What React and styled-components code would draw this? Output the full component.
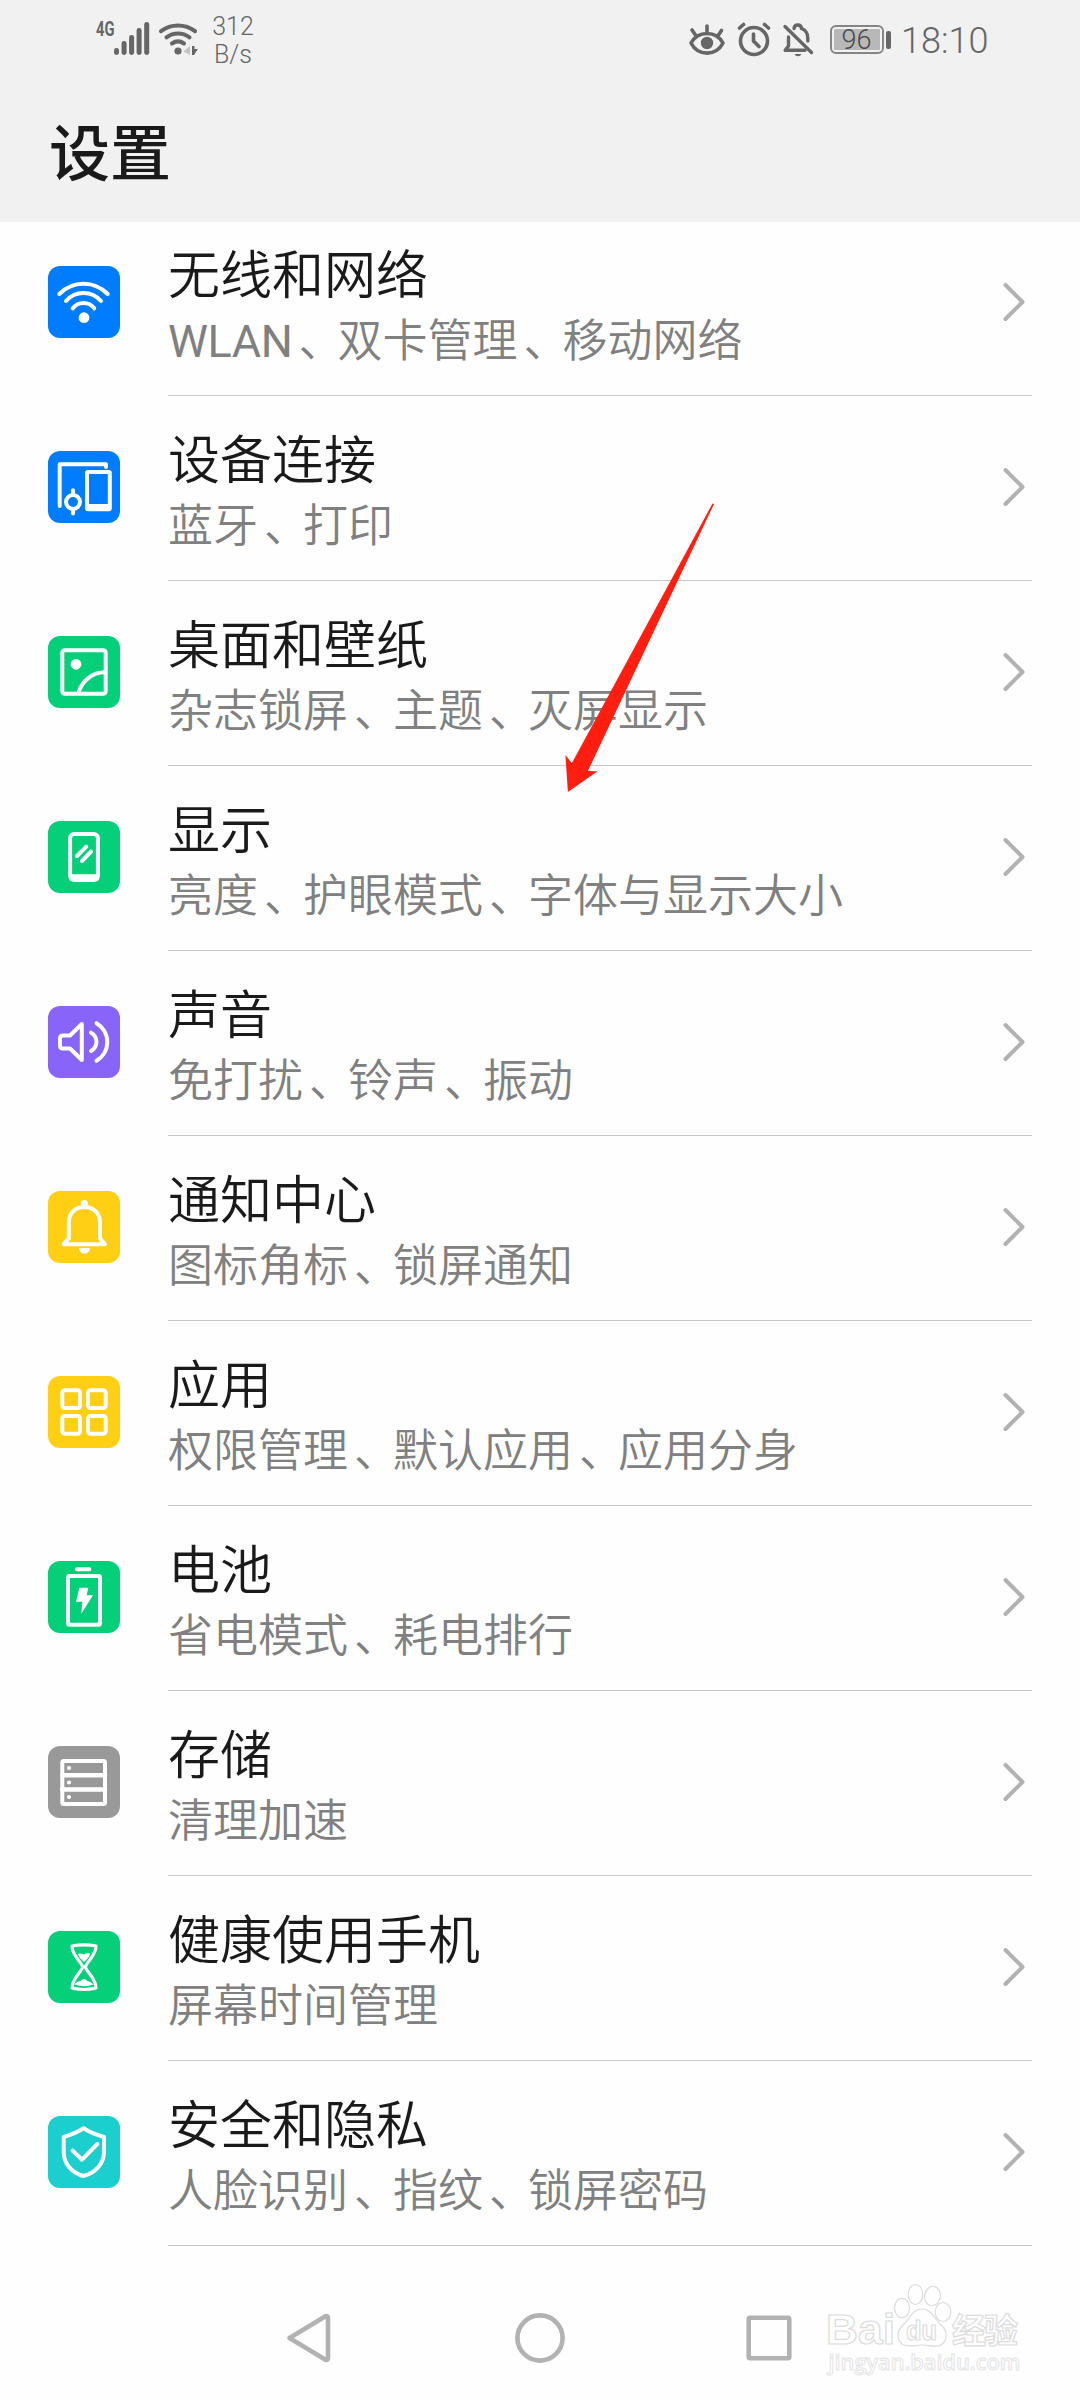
import { Fragment } from "react";
import styled, { createGlobalStyle } from "styled-components";

const colors = {
    blue: "#007dff",
    green: "#06cf79",
    purple: "#8864f8",
    yellow: "#ffcf14",
    grey: "#999999",
    cyan: "#1bcfcf",
    status: "#666666"
}

const GlobalStyle = createGlobalStyle`
    * {
        box-sizing: border-box;
    }

    body {
        margin: 0;
        background: #fefefe;
        font-family: Roboto, "Noto Sans CJK SC", sans-serif;
    }
`

const Screen = styled.div`
    position: relative;
    display: flex;
    flex-direction: column;
    width: 1080px;
    height: 2400px;
    overflow: hidden;
    background: #fefefe;
`

const Header = styled.header`
    height: 222px;
    flex: none;
    background: #f1f1f1;
`

const StatusBar = styled.div`
    display: flex;
    justify-content: space-between;
    height: 80px;
    padding: 0 90px 0 96px;
    color: ${colors.status};
`

const StatusGroup = styled.div`
    display: flex;
    align-items: flex-start;
`

const StatusIcon = styled.svg`
    display: block;
    flex: none;
    margin-top: 20px;
    margin-right: ${props => props.$gap || 0}px;
    overflow: visible;
`

const NetworkType = styled.span`
    width: 18px;
    margin-top: 19px;
    font-size: 21px;
    line-height: 21px;
    font-weight: 700;
    white-space: nowrap;
    transform: scaleX(0.7);
    transform-origin: left center;
`

const Speed = styled.div`
    width: 42px;
    margin-top: 13px;
    font-size: 25px;
    line-height: 28px;
    font-weight: 350;
    text-align: center;
`

const Battery = styled.div`
    display: flex;
    align-items: center;
    margin: 25px 10.5px 0 0;

    &::after {
        content: "";
        width: 5px;
        height: 18px;
        margin-left: 2px;
        border-radius: 2px;
        background: ${colors.status};
    }
`

const BatteryBody = styled.div`
    width: 54px;
    height: 29px;
    padding: 2px;
    border: 2px solid #858585;
    border-radius: 6px;
`

const BatteryLevel = styled.div`
    height: 21px;
    border-radius: 1px;
    background: #b8b8b8;
    color: #4a4a4a;
    font-size: 27px;
    line-height: 22px;
    font-weight: 350;
    text-align: center;
`

const Clock = styled.span`
    width: 89px;
    margin-top: 20px;
    font-size: 36px;
    line-height: 42px;
    font-weight: 350;
    white-space: nowrap;
`

const PageTitle = styled.h1`
    margin: 0;
    padding-left: 49px;
    color: #1a1a1a;
    font-size: 61px;
    line-height: 150px;
    font-weight: 500;
`

const ListViewport = styled.main`
    flex: 1;
    overflow: hidden;
`

// the first row is scrolled 11px under the header
const List = styled.ul`
    margin: -11px 0 0;
    padding: 0;
    list-style: none;
`

const Row = styled.li`
    display: flex;
    height: 185px;
    padding: 0 48px;
`

const Tile = styled.svg`
    flex: none;
    width: 72px;
    height: 72px;
    margin: 55px 48px 0 0;
    border-radius: 12px;
    background: ${props => colors[props.$color]};
    fill: none;
    stroke: #fff;
    stroke-width: 4;
    stroke-linecap: round;
    stroke-linejoin: round;

    .solid {
        fill: #fff;
        stroke: none;
    }
`

const RowBody = styled.div`
    display: flex;
    justify-content: space-between;
    flex: 1;
    height: 185px;
    border-bottom: 1px solid #c8c8c8;
`

const RowText = styled.div`
    padding-top: 36px;
    white-space: nowrap;
`

const RowTitle = styled.div`
    color: #1a1a1a;
    font-size: 52px;
    line-height: 60px;
    font-weight: 350;
`

const RowSummary = styled.div`
    margin-top: 8.5px;
    color: #808080;
    font-size: 45px;
    line-height: 52px;
    font-weight: 350;
`

const Latin = styled.span`
    font-weight: 400;
    letter-spacing: -0.4px;
`

// half-width glyph set inside a full-width cell
const Comma = styled.span`
    margin: 0 16.5px 0 6px;
    font-feature-settings: "halt";
`

const Chevron = styled.svg`
    flex: none;
    width: 24px;
    height: 42px;
    margin: 70px 6px 0 0;
    fill: none;
    stroke: #b2b2b2;
    stroke-width: 4;
    stroke-linecap: round;
    stroke-linejoin: round;
`

const NavBar = styled.nav`
    display: flex;
    align-items: center;
    justify-content: space-between;
    height: 128px;
    padding: 4px 288px 0 286px;
    flex: none;

    svg {
        fill: none;
        stroke: #b2b2b2;
        stroke-width: 4.6;
        stroke-linejoin: round;
    }
`

const Pointer = styled.svg`
    position: absolute;
    left: 560px;
    top: 500px;
    fill: #ff1e10;
`

const Watermark = styled.svg`
    position: absolute;
    left: 820px;
    top: 2276px;
    fill: #fefefe;
    stroke: #dcdcdc;
    stroke-width: 1.2;
    font-family: "Liberation Sans", "Noto Sans CJK SC", sans-serif;
    font-weight: 700;
`

const WatermarkUrl = styled.text`
    font-family: "Open Sans", sans-serif;
    font-size: 22px;
    font-weight: 600;
    stroke: #e4e4e4;
    stroke-width: 1;
`

const icons = {
    wifi: (
        <>
            <path d="M11.3 28A33.5 33.5 0 0 1 59.7 28" />
            <path d="M18 35A23 23 0 0 1 53 35" />
            <path d="M24.8 42.3A13.5 13.5 0 0 1 46.2 42.3" />
            <circle className="solid" cx="36" cy="51.7" r="5.4" />
        </>
    ),
    devices: (
        <>
            <path d="M11.7 55V13.3H58V16" />
            <rect x="39" y="21" width="22.8" height="37.3" rx="1" />
            <path className="solid" d="M38 53H63V59H38Z" />
            <circle cx="25" cy="51" r="7" />
            <path d="M25 39.3V43M25 59V62.5" />
        </>
    ),
    wallpaper: (
        <>
            <rect x="14.3" y="14.3" width="43.4" height="43.4" rx="2.5" />
            <circle className="solid" cx="28" cy="28.3" r="5.4" />
            <path d="M30.5 56.5C34 45 44 36.3 57 36.3" />
        </>
    ),
    display: (
        <>
            <rect x="22.1" y="13.1" width="27.8" height="45.8" rx="4" />
            <path className="solid" d="M21 53.3H51V57Q51 60 48 60H24Q21 60 21 57Z" />
            <path d="M29 35L38.3 25.7M34 40L43 30.7" />
        </>
    ),
    sound: (
        <>
            <path d="M15 29.5H22L33.8 18V54L22 42.5H15Q12 42.5 12 39.5V32.5Q12 29.5 15 29.5Z" />
            <path d="M43 26.7A10.4 10.4 0 0 1 43 45" />
            <path d="M48.5 17.2A21.8 21.8 0 0 1 48.5 54.8" />
        </>
    ),
    bell: (
        <>
            <circle className="solid" cx="36.3" cy="12.6" r="3.7" />
            <path d="M20.8 47.5V32C20.8 22 27 16 36.3 16S52 22 52 32V47.5L57 53.2H15.7Z" />
            <path className="solid" d="M31 57H42A5.5 5.7 0 0 1 31 57Z" />
        </>
    ),
    apps: (
        <>
            <rect x="14.3" y="14.3" width="17.7" height="17.7" rx="2.5" />
            <rect x="40" y="14.3" width="17.7" height="17.7" rx="2.5" />
            <rect x="14.3" y="40" width="17.7" height="17.7" rx="2.5" />
            <rect x="40" y="40" width="17.7" height="17.7" rx="2.5" />
        </>
    ),
    battery: (
        <>
            <rect x="20" y="15" width="32" height="48.7" rx="1.5" />
            <rect className="solid" x="27" y="6.3" width="16.3" height="4" rx="2" />
            <path className="solid" d="M31.3 26.7H40.3L38.7 34.3H45L33.3 52.7L34.3 40.7H28Z" />
        </>
    ),
    storage: (
        <>
            <rect x="14.3" y="15" width="42.7" height="43" rx="1.5" />
            <path d="M14.3 29.3H57M14.3 43.5H57" strokeWidth="4.6" />
            <circle className="solid" cx="21" cy="22" r="2.1" />
            <circle className="solid" cx="21" cy="36.5" r="2.1" />
            <circle className="solid" cx="21" cy="51" r="2.1" />
        </>
    ),
    hourglass: (
        <>
            <path
                strokeWidth="3.2"
                d="M24 15Q36 12.6 48 15C48 25 37.5 32 37.5 36S48 47 48 57Q36 60 24 57C24 47 34.5 40 34.5 36S24 25 24 15Z"
            />
            <path className="solid" d="M30 23Q33 22 36 23.5Q39 21 42 22.5Q42 26 36 31Q31 27 30 23Z" />
            <path className="solid" d="M26.3 53.5Q29 50 32.5 50Q36 46 39.5 50Q43 50.5 45.7 53.5Q36 57 26.3 53.5Z" />
        </>
    ),
    shield: (
        <>
            <path d="M35.5 12.2Q42 17 56 21V36C56 48 47 57 35.5 60C24 57 15.7 48 15.7 36V21Q29 17 35.5 12.2Z" />
            <path d="M24.5 34.5L34 43.7L49.3 28" />
        </>
    )
}

const settings = [
    { icon: "wifi", color: "blue", title: "无线和网络", summary: "WLAN、双卡管理、移动网络" },
    { icon: "devices", color: "blue", title: "设备连接", summary: "蓝牙、打印" },
    { icon: "wallpaper", color: "green", title: "桌面和壁纸", summary: "杂志锁屏、主题、灭屏显示" },
    { icon: "display", color: "green", title: "显示", summary: "亮度、护眼模式、字体与显示大小" },
    { icon: "sound", color: "purple", title: "声音", summary: "免打扰、铃声、振动" },
    { icon: "bell", color: "yellow", title: "通知中心", summary: "图标角标、锁屏通知" },
    { icon: "apps", color: "yellow", title: "应用", summary: "权限管理、默认应用、应用分身" },
    { icon: "battery", color: "green", title: "电池", summary: "省电模式、耗电排行" },
    { icon: "storage", color: "grey", title: "存储", summary: "清理加速" },
    { icon: "hourglass", color: "green", title: "健康使用手机", summary: "屏幕时间管理" },
    { icon: "shield", color: "cyan", title: "安全和隐私", summary: "人脸识别、指纹、锁屏密码" }
]

const Summary = ({ text }) => (
    <RowSummary>
        {text.split("、").map((part, index) => (
            <Fragment key={part}>
                {index > 0 && <Comma>、</Comma>}
                {/^[A-Z]+$/.test(part) ? <Latin>{part}</Latin> : part}
            </Fragment>
        ))}
    </RowSummary>
)

const SettingRow = ({ item }) => (
    <Row>
        <Tile $color={item.color} viewBox="0 0 72 72">{icons[item.icon]}</Tile>
        <RowBody>
            <RowText>
                <RowTitle>{item.title}</RowTitle>
                <Summary text={item.summary} />
            </RowText>
            <Chevron viewBox="0 0 24 42">
                <path d="M3.5 4L20.5 21L3.5 38" />
            </Chevron>
        </RowBody>
    </Row>
)

const Status = () => (
    <StatusBar>
        <StatusGroup>
            <NetworkType>4G</NetworkType>
            <StatusIcon width="35" height="36" $gap={9} fill={colors.status}>
                <rect x="0" y="28" width="5" height="7" rx="2.4" />
                <rect x="7.6" y="21" width="5" height="14" rx="2.4" />
                <rect x="15.1" y="15" width="5" height="20" rx="2.4" />
                <rect x="22.6" y="8" width="5" height="27" rx="2.4" />
                <rect x="30.2" y="2" width="5" height="33" rx="2.4" />
            </StatusIcon>
            <StatusIcon width="42" height="36" $gap={12} fill="none" stroke={colors.status} strokeWidth="4" strokeLinecap="round">
                <path d="M3 11.2A28 28 0 0 1 37 11.2" />
                <path d="M8.5 17.3A19 19 0 0 1 31.5 17.3" />
                <path d="M14 23.5A10.5 10.5 0 0 1 26 23.5" />
                <circle cx="20" cy="31" r="3.6" fill={colors.status} stroke="none" />
                <path d="M25.5 31.5L32 26V35Z" fill="#c4c4c4" stroke="none" />
                <path d="M34 26H36.5V29H40L36.5 34V35H34Z" fill={colors.status} stroke="none" />
            </StatusIcon>
            <Speed>312<br />B/s</Speed>
        </StatusGroup>
        <StatusGroup>
            <StatusIcon width="36" height="36" $gap={12} fill="none" stroke={colors.status} strokeWidth="3.6" strokeLinecap="round">
                <path d="M2 23C9 10.3 27 10.3 34 23C27 36.5 9 36.5 2 23Z" strokeLinejoin="round" />
                <circle cx="18" cy="23" r="6.2" fill={colors.status} stroke="none" />
                <path d="M18 6V12M3 10L6.5 15M32.5 10.5L29.5 15" />
            </StatusIcon>
            <StatusIcon width="34" height="36" $gap={12} fill="none" stroke={colors.status} strokeWidth="3.6" strokeLinecap="round">
                <circle cx="17" cy="21" r="13.5" />
                <path d="M16.5 14V21L22 26.5M2.5 8L6.5 4.5M31.5 8L27.5 4.5" />
            </StatusIcon>
            <StatusIcon width="30" height="36" $gap={17} fill="none" stroke={colors.status} strokeWidth="3.4" strokeLinecap="round">
                <path d="M2 6.5L28.5 32.5" />
                <path d="M5.5 17V26L2.2 30.3H22" strokeLinejoin="round" />
                <path d="M11 8.5Q11.5 5 14.8 5T18.6 8.5Q24.8 11 24.8 18V21" />
                <path d="M11.5 34H18.5Q17.5 36.3 15 36.3T11.5 34Z" fill={colors.status} stroke="none" />
            </StatusIcon>
            <Battery>
                <BatteryBody>
                    <BatteryLevel>96</BatteryLevel>
                </BatteryBody>
            </Battery>
            <Clock>18:10</Clock>
        </StatusGroup>
    </StatusBar>
)

const App = () => {
    return (
        <Screen>
            <GlobalStyle />
            <Header>
                <Status />
                <PageTitle>设置</PageTitle>
            </Header>
            <ListViewport>
                <List>
                    {settings.map(item => <SettingRow key={item.title} item={item} />)}
                </List>
            </ListViewport>
            <NavBar>
                <svg width="46" height="54" viewBox="0 0 46 54">
                    <path d="M3.5 27L39.5 5.2Q42 4.5 42 7V47Q42 49.5 39.5 48.8Z" />
                </svg>
                <svg width="52" height="52" viewBox="0 0 52 52">
                    <circle cx="27" cy="26" r="22.6" />
                </svg>
                <svg width="46" height="46" viewBox="0 0 46 46">
                    <rect x="2.7" y="2.7" width="40.6" height="40.6" rx="1.5" />
                </svg>
            </NavBar>

            <Pointer width="160" height="296">
                <path d="M152.5 3.5L154 4L27.9 271L37.5 271.3L7.9 292L5.4 255L11.8 263.3Z" />
            </Pointer>

            <Watermark width="210" height="110">
                <text x="6" y="68" fontSize="43" textLength="69" lengthAdjust="spacingAndGlyphs">Bai</text>
                <ellipse cx="82" cy="32" rx="7.5" ry="9.7" />
                <ellipse cx="95.5" cy="18.5" rx="7.3" ry="10" />
                <ellipse cx="112.5" cy="20" rx="7.8" ry="9.8" transform="rotate(10 112.5 20)" />
                <ellipse cx="123" cy="36" rx="7.8" ry="9.5" />
                <path d="M102 33C93 33 90 42 84 48C77 54 76 63 82 68C89 72 95 69 102 69S115 72 121 69C128 64 128 55 121 49C114 42 111 33 102 33Z" />
                <text x="86" y="64" fontSize="28" textLength="31" lengthAdjust="spacingAndGlyphs">du</text>
                <text x="132" y="67" fontSize="34" textLength="66">经验</text>
                <WatermarkUrl x="8.5" y="94" textLength="192" lengthAdjust="spacingAndGlyphs">jingyan.baidu.com</WatermarkUrl>
            </Watermark>
        </Screen>
    )
}

export default App;
